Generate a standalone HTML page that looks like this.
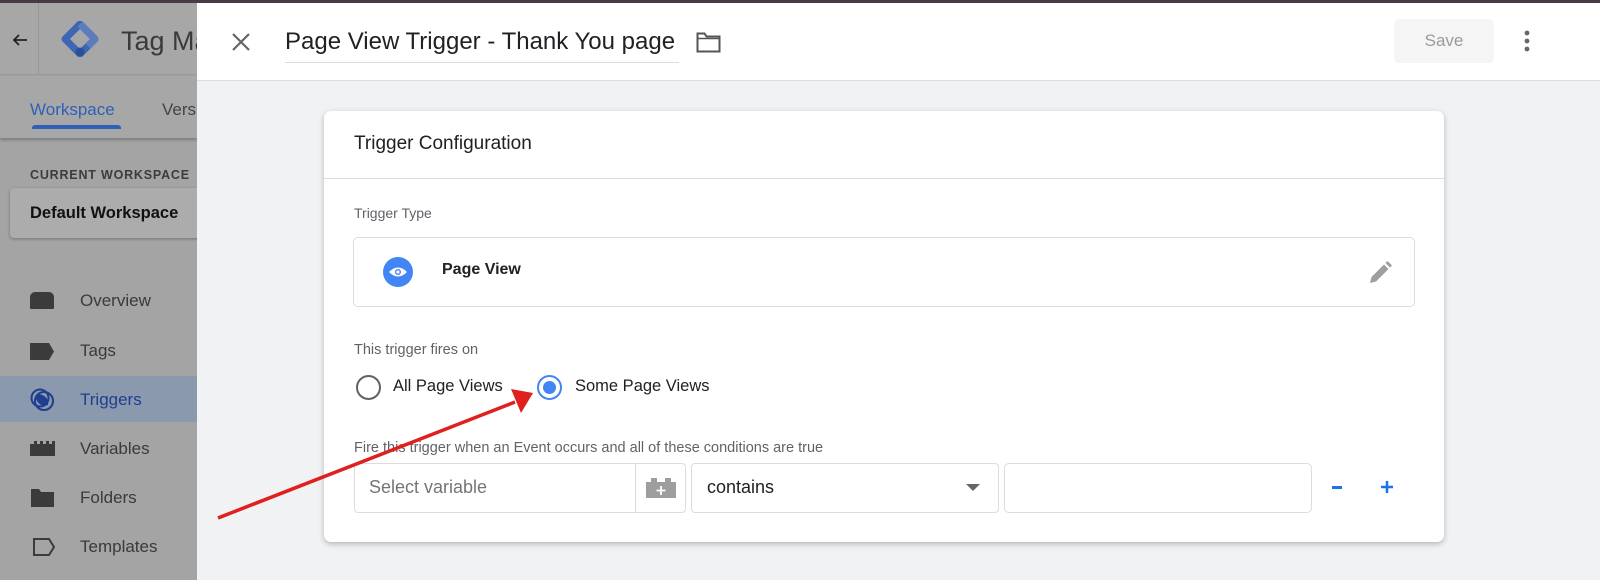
<!DOCTYPE html>
<html><head><meta charset="utf-8"><style>
*{box-sizing:border-box;margin:0;padding:0}
body{width:1600px;height:580px;overflow:hidden;position:relative;font-family:"Liberation Sans",Arial,sans-serif;background:#a4a4a4}
.abs{position:absolute}
</style></head><body>
<div class="abs" style="left:0;top:0;width:1600px;height:3px;background:#4a3845;z-index:5"></div>
<div class="abs" style="left:0;top:3px;width:197px;height:72px;background:#a7a7a7;border-bottom:1px solid #9a9a9a"></div>
<div class="abs" style="left:38px;top:3px;width:1px;height:72px;background:#979797"></div>
<svg class="abs" style="left:10px;top:32px" width="20" height="16" viewBox="0 0 20 16"><path d="M17 8H4M9 3L4 8l5 5" stroke="#222" stroke-width="1.8" fill="none"/></svg>
<svg class="abs" style="left:60px;top:21px" width="40" height="36" viewBox="0 0 40 36"><path d="M20 3L35 18 20 33 5 18Z" fill="none" stroke="#3d66b5" stroke-width="7" stroke-linejoin="round"/><path d="M20 3L35 18 28 25" fill="none" stroke="#5b7dbd" stroke-width="7" stroke-linejoin="round"/><circle cx="20" cy="31" r="4.5" fill="#2b4f98"/></svg>
<div class="abs" style="left:121px;top:26px;font-size:27px;color:#3a3a3a">Tag Ma</div>
<div class="abs" style="left:0;top:76px;width:197px;height:62px;background:#a7a7a7;box-shadow:0 2px 3px rgba(0,0,0,.25)"></div>
<div class="abs" style="left:30px;top:100px;font-size:17px;color:#2f5fb8">Workspace</div>
<div class="abs" style="left:162px;top:100px;font-size:17px;color:#444">Vers</div>
<div class="abs" style="left:32px;top:125px;width:89px;height:4px;background:#2f5fb8;border-radius:3px 3px 0 0"></div>
<div class="abs" style="left:30px;top:168px;font-size:12.5px;letter-spacing:.8px;color:#3c3c3c;font-weight:bold">CURRENT WORKSPACE</div>
<div class="abs" style="left:10px;top:188px;width:200px;height:50px;background:#acacac;border-radius:4px;box-shadow:0 1px 3px rgba(0,0,0,.3)"></div>
<div class="abs" style="left:30px;top:204px;font-size:16.5px;color:#111;font-weight:bold">Default Workspace</div>
<div class="abs" style="left:0;top:376px;width:197px;height:46px;background:#8a99ad"></div>
<div class="abs" style="left:30px;top:292px;width:24px;height:17px;background:#3b3b3b;border-radius:5px 5px 1px 1px"></div>
<svg class="abs" style="left:30px;top:343px" width="25" height="17"><path d="M0 0h19l5 8.5-5 8.5H0z" fill="#3b3b3b"/></svg>
<svg class="abs" style="left:30px;top:387px" width="26" height="26"><circle cx="10" cy="11" r="8.5" fill="none" stroke="#1e3f8f" stroke-width="2"/><circle cx="14" cy="14" r="9" fill="none" stroke="#1e3f8f" stroke-width="2"/><path d="M6 8a9 9 0 0 1 12 10 9 9 0 0 1-12-10z" fill="#1e3f8f"/></svg>
<svg class="abs" style="left:30px;top:441px" width="25" height="15"><path d="M0 3h4V0h3v3h3V0h3v3h3V0h3v3h3V0h3v15H0z" fill="#3b3b3b"/></svg>
<svg class="abs" style="left:31px;top:489px" width="23" height="18"><path d="M0 0h8l2 3h13v15H0z" fill="#3b3b3b"/></svg>
<svg class="abs" style="left:33px;top:538px" width="22" height="18"><path d="M1 1h15l5 8-5 8H1z" fill="none" stroke="#3b3b3b" stroke-width="2"/></svg>
<div class="abs" style="left:80px;top:291px;font-size:17px;color:#3a3a3a">Overview</div>
<div class="abs" style="left:80px;top:341px;font-size:17px;color:#3a3a3a">Tags</div>
<div class="abs" style="left:80px;top:390px;font-size:17px;color:#1e3f8f">Triggers</div>
<div class="abs" style="left:80px;top:439px;font-size:17px;color:#3a3a3a">Variables</div>
<div class="abs" style="left:80px;top:488px;font-size:17px;color:#3a3a3a">Folders</div>
<div class="abs" style="left:80px;top:537px;font-size:17px;color:#3a3a3a">Templates</div>
<div class="abs" style="left:197px;top:3px;width:1403px;height:577px;background:#f1f2f4"></div>
<div class="abs" style="left:197px;top:3px;width:1403px;height:78px;background:#fff;border-bottom:1px solid #dadce0"></div>
<svg class="abs" style="left:231px;top:32px" width="20" height="20"><path d="M2 2l16 16M18 2L2 18" stroke="#666" stroke-width="2.2"/></svg>
<div class="abs" style="left:285px;top:28px;font-size:24px;color:#202124">Page View Trigger - Thank You page</div>
<div class="abs" style="left:285px;top:62px;width:394px;height:1px;background:#dadce0"></div>
<svg class="abs" style="left:696px;top:32px" width="25" height="21"><path d="M1.5 1.5h7l2 3h13v15h-22z" fill="none" stroke="#555" stroke-width="2"/><path d="M1.5 6.5h22" stroke="#555" stroke-width="1.5"/></svg>
<div class="abs" style="left:1394px;top:19px;width:100px;height:44px;background:#f5f5f5;border-radius:5px;text-align:center;line-height:44px;font-size:17px;color:#9a9a9a">Save</div>
<svg class="abs" style="left:1522px;top:30px" width="10" height="24"><circle cx="5" cy="3" r="2.4" fill="#666"/><circle cx="5" cy="11" r="2.4" fill="#666"/><circle cx="5" cy="19" r="2.4" fill="#666"/></svg>
<div class="abs" style="left:324px;top:111px;width:1120px;height:431px;background:#fff;border-radius:7px;box-shadow:0 2px 6px rgba(0,0,0,.25)"></div>
<div class="abs" style="left:354px;top:133px;font-size:19px;color:#202124">Trigger Configuration</div>
<div class="abs" style="left:324px;top:178px;width:1120px;height:1px;background:#dadce0"></div>
<div class="abs" style="left:354px;top:205px;font-size:14px;color:#5f6368">Trigger Type</div>
<div class="abs" style="left:353px;top:237px;width:1062px;height:70px;border:1px solid #dadce0;border-radius:5px"></div>
<svg class="abs" style="left:383px;top:257px" width="30" height="30"><circle cx="15" cy="15" r="15" fill="#4285f4"/><path d="M6 15q9-9 18 0q-9 9-18 0z" fill="#fff"/><circle cx="15" cy="15" r="3" fill="#4285f4"/><circle cx="15" cy="15" r="1.6" fill="#fff"/></svg>
<div class="abs" style="left:442px;top:261px;font-size:16px;font-weight:bold;color:#202124">Page View</div>
<svg class="abs" style="left:1367px;top:260px" width="26" height="26"><path d="M3 23l1.5-6L17 4.5l4.5 4.5L9 21.5z M18.5 3l2-2 4.5 4.5-2 2z" fill="#9e9e9e"/></svg>
<div class="abs" style="left:354px;top:342px;font-size:14.5px;color:#5f6368">This trigger fires on</div>
<div class="abs" style="left:356px;top:375px;width:25px;height:25px;border:2.5px solid #616161;border-radius:50%"></div>
<div class="abs" style="left:393px;top:377px;font-size:16.5px;color:#202124">All Page Views</div>
<div class="abs" style="left:537px;top:375px;width:25px;height:25px;border:2.5px solid #4285f4;border-radius:50%"></div>
<div class="abs" style="left:543px;top:381px;width:13px;height:13px;background:#4285f4;border-radius:50%"></div>
<div class="abs" style="left:575px;top:377px;font-size:16.5px;color:#202124">Some Page Views</div>
<div class="abs" style="left:354px;top:440px;font-size:14.5px;color:#5f6368">Fire this trigger when an Event occurs and all of these conditions are true</div>
<div class="abs" style="left:354px;top:463px;width:332px;height:50px;border:1px solid #dadce0;border-radius:4px"></div>
<div class="abs" style="left:635px;top:464px;width:1px;height:48px;background:#dadce0"></div>
<div class="abs" style="left:369px;top:477px;font-size:18px;color:#757575">Select variable</div>
<svg class="abs" style="left:646px;top:478px" width="30" height="20"><path d="M0 4h5V0h6v4h8V0h6v4h5v16H0z" fill="#9e9e9e"/><path d="M15 8v9M10.5 12.5h9" stroke="#fff" stroke-width="1.8"/></svg>
<div class="abs" style="left:691px;top:463px;width:308px;height:50px;border:1px solid #dadce0;border-radius:4px"></div>
<div class="abs" style="left:707px;top:477px;font-size:18px;color:#202124">contains</div>
<svg class="abs" style="left:966px;top:484px" width="14" height="8"><path d="M0 0h14L7 7z" fill="#666"/></svg>
<div class="abs" style="left:1004px;top:463px;width:308px;height:50px;border:1px solid #dadce0;border-radius:5px"></div>
<div class="abs" style="left:1332px;top:486px;width:10px;height:2.5px;background:#1a73e8"></div>
<svg class="abs" style="left:1380px;top:480px" width="14" height="14"><path d="M7 1v12M1 7h12" stroke="#1a73e8" stroke-width="2.5"/></svg>
<svg class="abs" style="left:0;top:0;z-index:10" width="1600" height="580"><line x1="218" y1="518" x2="515" y2="402" stroke="#e0201c" stroke-width="3.5"/><path d="M533 393L511 389 521 413z" fill="#e0201c"/></svg>
</body></html>
